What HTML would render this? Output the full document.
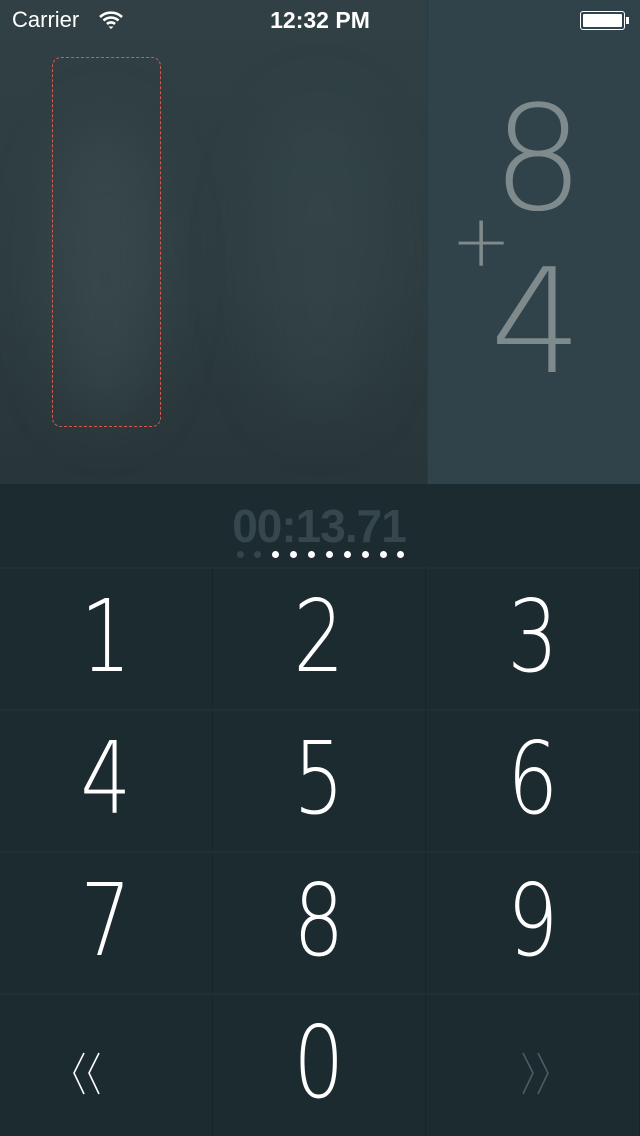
<!DOCTYPE html>
<html><head><meta charset="utf-8"><style>
*{margin:0;padding:0;box-sizing:border-box}
body{width:640px;height:1136px;overflow:hidden;background:#1c2b30;font-family:"Liberation Sans",sans-serif;position:relative}
.top{position:absolute;left:0;top:0;width:427px;height:484px;background:linear-gradient(180deg,#304044 0%,#2d3c40 60%,#283539 100%)}
.glow{position:absolute;border-radius:50%;filter:blur(30px)}
.right{position:absolute;left:427px;top:0;width:213px;height:484px;background:#30424a;border-left:1px solid #2a3a3e}
.sb{position:absolute;top:0;height:40px;color:#fff;font-size:22px;line-height:40px}
.dash{position:absolute;left:52px;top:57px;width:109px;height:370px;border:1px dashed #d9584a;border-radius:9px}
.big{position:absolute;color:#7f8a8c;font-family:"DejaVu Sans ExtraLight","DejaVu Sans Light","Liberation Sans",sans-serif;font-weight:100;line-height:1}
.timer{position:absolute;top:484px;left:0;width:640px;height:83px;background:#1c2b30}
.tt{position:absolute;left:219px;top:503px;width:200px;text-align:center;font-family:"Liberation Sans Narrow","Liberation Sans",sans-serif;font-weight:bold;font-size:46px;color:#35464c;line-height:46px;letter-spacing:-1px}
.dot{position:absolute;top:551px;width:7px;height:7px;border-radius:50%;background:#fff}
.cell{position:absolute;width:213px;height:141px;background:#1c2b30;border-right:1px solid #17252a;border-top:2px solid #203135;color:#fff;text-align:center;font-family:"DejaVu Sans ExtraLight","DejaVu Sans Light","Liberation Sans",sans-serif;font-weight:100;font-size:100px;line-height:136px}
.cell span{display:inline-block;transform:scaleX(.8)}
</style></head><body>
<div class="top">
<div class="glow" style="left:50px;top:120px;width:110px;height:300px;background:rgba(80,95,95,.3)"></div>
<div class="glow" style="left:250px;top:100px;width:140px;height:320px;background:rgba(70,90,90,.2)"></div>
</div>
<div class="right"></div>
<div class="sb" style="left:12px">Carrier</div>
<svg style="position:absolute;left:98px;top:10px" width="26" height="20" viewBox="0 0 26 20"><path d="M2 7a16 16 0 0 1 22 0M5.5 10.5a11 11 0 0 1 15 0M9 14a6 6 0 0 1 8 0" stroke="#fff" stroke-width="2.6" fill="none"/><path d="M10.5 16.5L13 19l2.5-2.5z" fill="#fff"/></svg>
<div class="sb" style="left:0;width:640px;text-align:center;font-weight:bold;font-size:23px">12:32 PM</div>
<div style="position:absolute;left:580px;top:11px;width:45px;height:19px;border:1.5px solid #fff;border-radius:3px;padding:2px"><div style="width:100%;height:100%;background:#fff;border-radius:1px"></div></div>
<div style="position:absolute;left:626px;top:17px;width:3px;height:7px;background:#fff"></div>
<div class="dash"></div>
<div class="big" style="left:492px;top:87px;font-size:145px">8</div>
<div class="big" style="left:451px;top:205px;font-size:72px">+</div>
<div class="big" style="left:490px;top:250px;font-size:145px">4</div>
<div class="timer"></div>
<div class="tt">00:13.71</div>
<div class="dot" style="left:237px;background:#33454b"></div>
<div class="dot" style="left:254px;background:#33454b"></div>
<div class="dot" style="left:272px"></div><div class="dot" style="left:290px"></div><div class="dot" style="left:308px"></div><div class="dot" style="left:326px"></div><div class="dot" style="left:344px"></div><div class="dot" style="left:362px"></div><div class="dot" style="left:380px"></div><div class="dot" style="left:397px"></div>
<div class="cell" style="left:0;top:567px"><span>1</span></div>
<div class="cell" style="left:213px;top:567px"><span>2</span></div>
<div class="cell" style="left:427px;top:567px"><span>3</span></div>
<div class="cell" style="left:0;top:709px"><span>4</span></div>
<div class="cell" style="left:213px;top:709px"><span>5</span></div>
<div class="cell" style="left:427px;top:709px"><span>6</span></div>
<div class="cell" style="left:0;top:851px"><span>7</span></div>
<div class="cell" style="left:213px;top:851px"><span>8</span></div>
<div class="cell" style="left:427px;top:851px"><span>9</span></div>
<div class="cell" style="left:0;top:993px;height:143px"></div>
<div class="cell" style="left:213px;top:993px;height:143px;line-height:136px"><span>0</span></div>
<div class="cell" style="left:427px;top:993px;height:143px"></div>
<svg style="position:absolute;left:0;top:990px" width="640" height="146"><path d="M84 63L74 83L84 104M99 63L89 83L99 104" stroke="#fff" stroke-width="1.6" fill="none"/><path d="M523 63L533 83L523 104M538 63L548 83L538 104" stroke="#4a5d61" stroke-width="1.6" fill="none"/></svg>
</body></html>
